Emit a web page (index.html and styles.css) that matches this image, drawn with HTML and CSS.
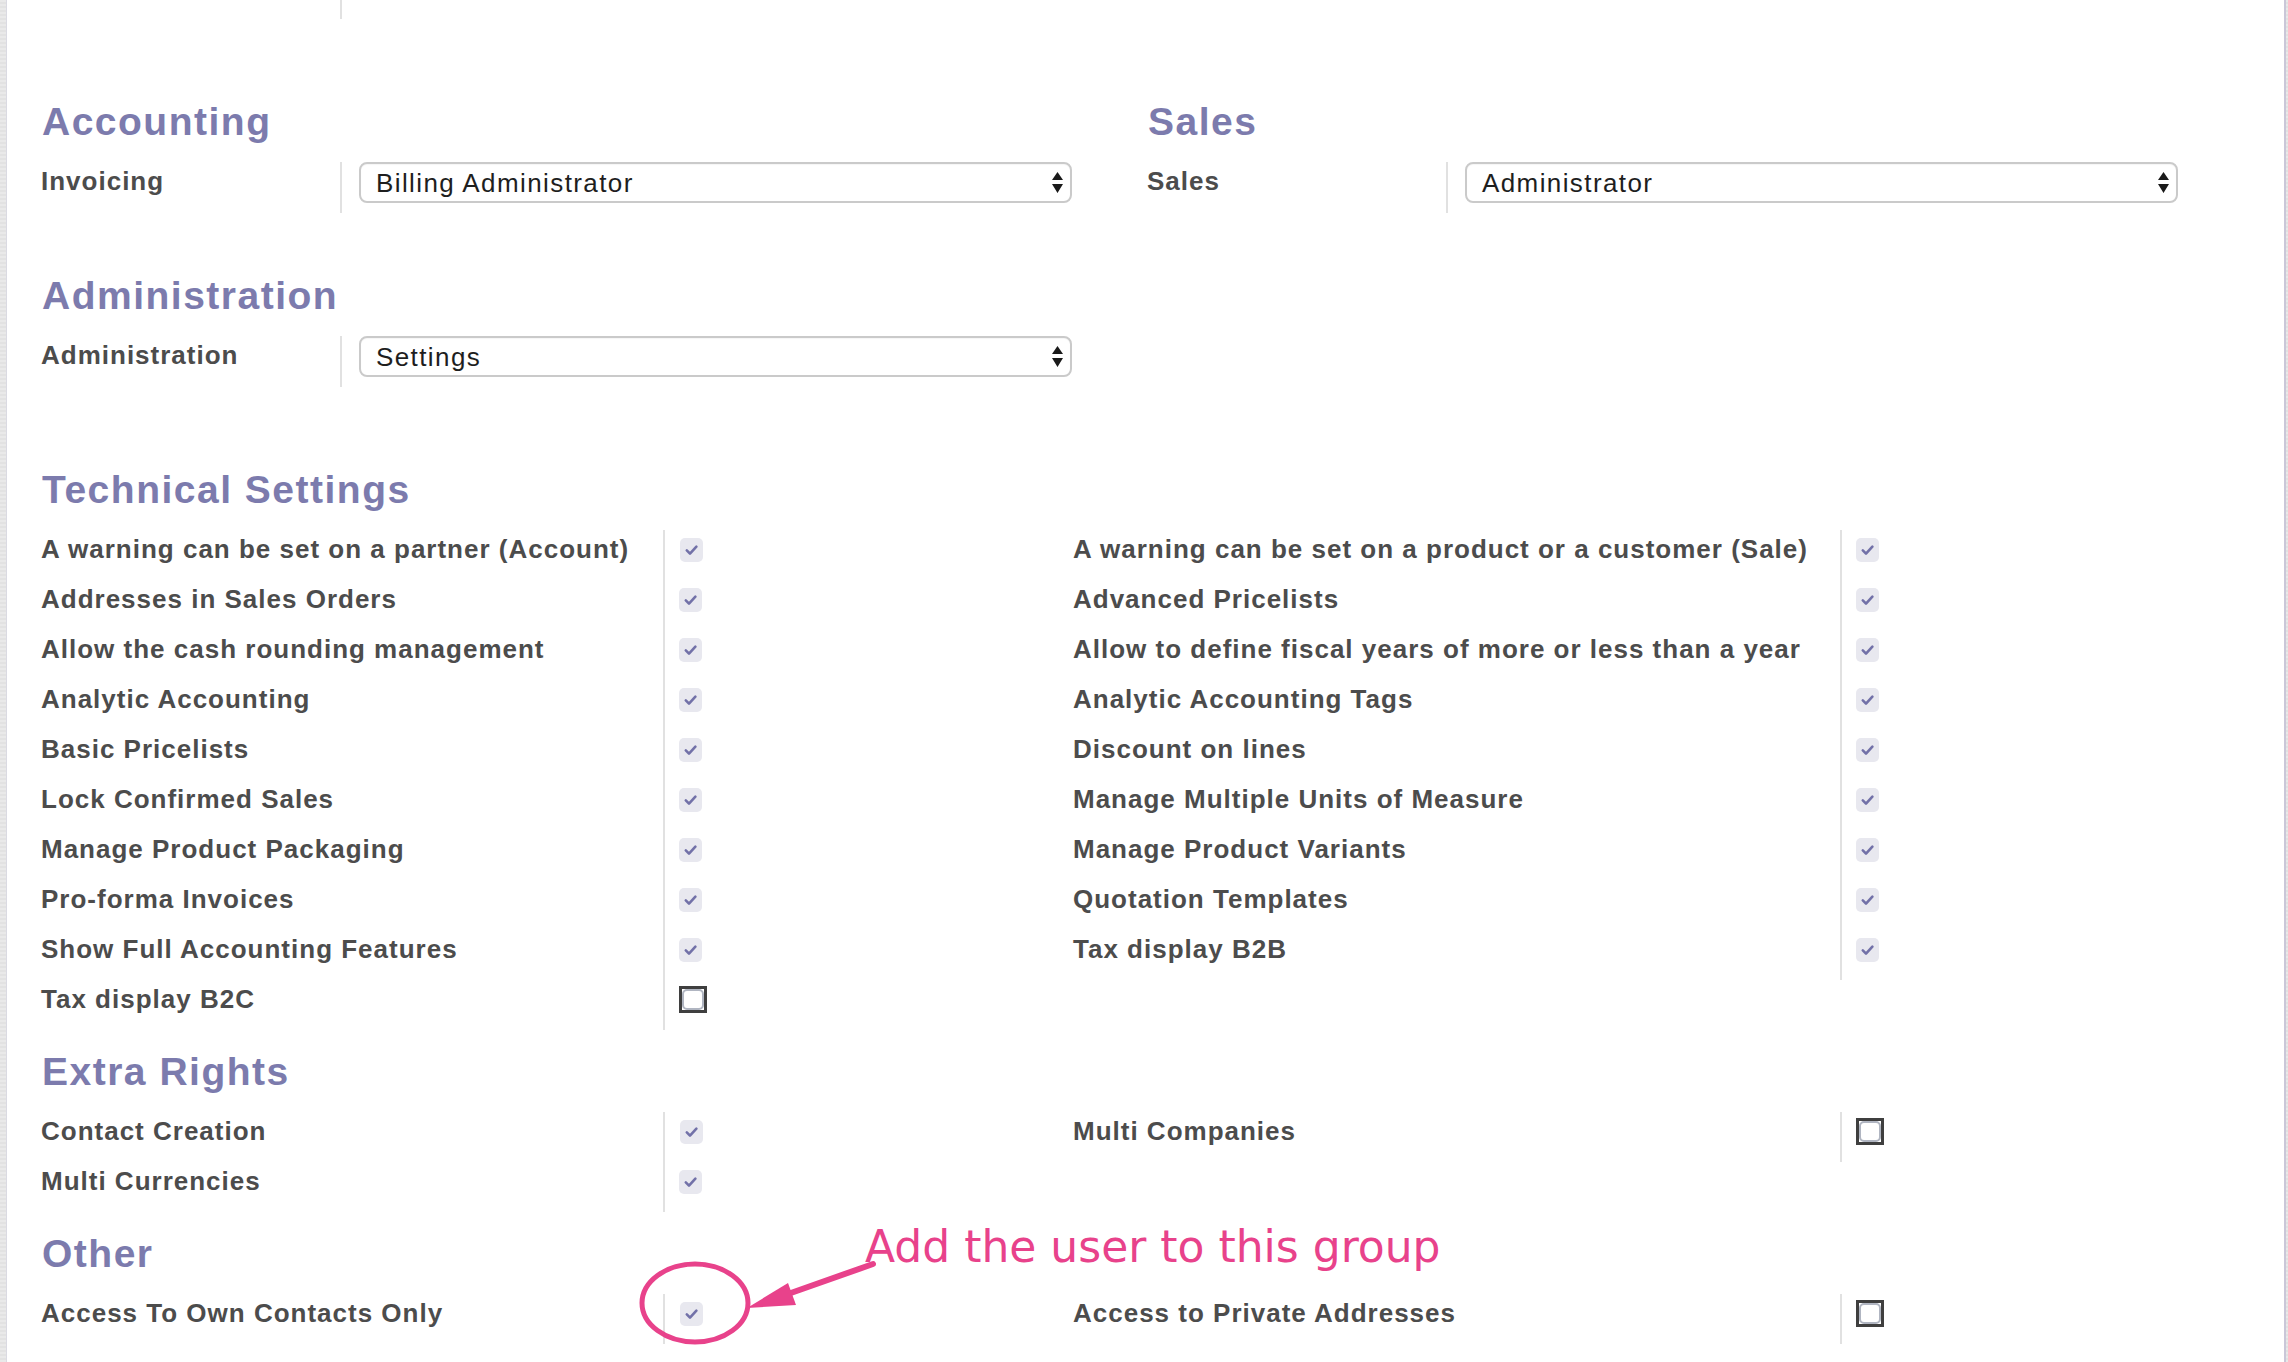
FILE: index.html
```html
<!DOCTYPE html>
<html lang="en">
<head>
<meta charset="utf-8">
<title>User access rights</title>
<link rel="stylesheet" href="styles.css">
</head>
<body>
<div class="page">
  <div class="edge-left"></div>
  <main class="sheet">
    <div class="pair-row top-tail">
      <div class="lab-cell"></div><div class="fld-cell"></div>
    </div>

    <div class="pair gap-first">
      <section class="half">
        <h2 class="sep">Accounting</h2>
        <div class="pair-row">
          <div class="lab-cell">Invoicing</div>
          <div class="fld-cell">
            <div class="select"><span>Billing Administrator</span>
              <svg class="updown" viewBox="0 0 11 21"><path d="M5.5 0 L11 8 L0 8 Z M0 12 L11 12 L5.5 21 Z" fill="#1a1a1a"/></svg>
            </div>
          </div>
        </div>
      </section>
      <section class="half">
        <h2 class="sep">Sales</h2>
        <div class="pair-row">
          <div class="lab-cell">Sales</div>
          <div class="fld-cell">
            <div class="select"><span>Administrator</span>
              <svg class="updown" viewBox="0 0 11 21"><path d="M5.5 0 L11 8 L0 8 Z M0 12 L11 12 L5.5 21 Z" fill="#1a1a1a"/></svg>
            </div>
          </div>
        </div>
      </section>
    </div>

    <div class="pair gap-admin">
      <section class="half">
        <h2 class="sep">Administration</h2>
        <div class="pair-row">
          <div class="lab-cell">Administration</div>
          <div class="fld-cell">
            <div class="select"><span>Settings</span>
              <svg class="updown" viewBox="0 0 11 21"><path d="M5.5 0 L11 8 L0 8 Z M0 12 L11 12 L5.5 21 Z" fill="#1a1a1a"/></svg>
            </div>
          </div>
        </div>
      </section>
    </div>

    <section class="gap-tech">
      <h2 class="sep">Technical Settings</h2>
      <div class="quad">
        <div class="q-lab">A warning can be set on a partner (Account)</div><div class="q-fld"><span class="cb-on"><svg viewBox="0 0 23 24"><path d="M6.8 12.4 L10 15.6 L16.4 8.6"/></svg></span></div>
        <div class="q-lab">A warning can be set on a product or a customer (Sale)</div><div class="q-fld"><span class="cb-on"><svg viewBox="0 0 23 24"><path d="M6.8 12.4 L10 15.6 L16.4 8.6"/></svg></span></div>

        <div class="q-lab">Addresses in Sales Orders</div><div class="q-fld"><span class="cb-on"><svg viewBox="0 0 23 24"><path d="M6.8 12.4 L10 15.6 L16.4 8.6"/></svg></span></div>
        <div class="q-lab">Advanced Pricelists</div><div class="q-fld"><span class="cb-on"><svg viewBox="0 0 23 24"><path d="M6.8 12.4 L10 15.6 L16.4 8.6"/></svg></span></div>

        <div class="q-lab">Allow the cash rounding management</div><div class="q-fld"><span class="cb-on"><svg viewBox="0 0 23 24"><path d="M6.8 12.4 L10 15.6 L16.4 8.6"/></svg></span></div>
        <div class="q-lab">Allow to define fiscal years of more or less than a year</div><div class="q-fld"><span class="cb-on"><svg viewBox="0 0 23 24"><path d="M6.8 12.4 L10 15.6 L16.4 8.6"/></svg></span></div>

        <div class="q-lab">Analytic Accounting</div><div class="q-fld"><span class="cb-on"><svg viewBox="0 0 23 24"><path d="M6.8 12.4 L10 15.6 L16.4 8.6"/></svg></span></div>
        <div class="q-lab">Analytic Accounting Tags</div><div class="q-fld"><span class="cb-on"><svg viewBox="0 0 23 24"><path d="M6.8 12.4 L10 15.6 L16.4 8.6"/></svg></span></div>

        <div class="q-lab">Basic Pricelists</div><div class="q-fld"><span class="cb-on"><svg viewBox="0 0 23 24"><path d="M6.8 12.4 L10 15.6 L16.4 8.6"/></svg></span></div>
        <div class="q-lab">Discount on lines</div><div class="q-fld"><span class="cb-on"><svg viewBox="0 0 23 24"><path d="M6.8 12.4 L10 15.6 L16.4 8.6"/></svg></span></div>

        <div class="q-lab">Lock Confirmed Sales</div><div class="q-fld"><span class="cb-on"><svg viewBox="0 0 23 24"><path d="M6.8 12.4 L10 15.6 L16.4 8.6"/></svg></span></div>
        <div class="q-lab">Manage Multiple Units of Measure</div><div class="q-fld"><span class="cb-on"><svg viewBox="0 0 23 24"><path d="M6.8 12.4 L10 15.6 L16.4 8.6"/></svg></span></div>

        <div class="q-lab">Manage Product Packaging</div><div class="q-fld"><span class="cb-on"><svg viewBox="0 0 23 24"><path d="M6.8 12.4 L10 15.6 L16.4 8.6"/></svg></span></div>
        <div class="q-lab">Manage Product Variants</div><div class="q-fld"><span class="cb-on"><svg viewBox="0 0 23 24"><path d="M6.8 12.4 L10 15.6 L16.4 8.6"/></svg></span></div>

        <div class="q-lab">Pro-forma Invoices</div><div class="q-fld"><span class="cb-on"><svg viewBox="0 0 23 24"><path d="M6.8 12.4 L10 15.6 L16.4 8.6"/></svg></span></div>
        <div class="q-lab">Quotation Templates</div><div class="q-fld"><span class="cb-on"><svg viewBox="0 0 23 24"><path d="M6.8 12.4 L10 15.6 L16.4 8.6"/></svg></span></div>

        <div class="q-lab">Show Full Accounting Features</div><div class="q-fld"><span class="cb-on"><svg viewBox="0 0 23 24"><path d="M6.8 12.4 L10 15.6 L16.4 8.6"/></svg></span></div>
        <div class="q-lab">Tax display B2B</div><div class="q-fld"><span class="cb-on"><svg viewBox="0 0 23 24"><path d="M6.8 12.4 L10 15.6 L16.4 8.6"/></svg></span></div>

        <div class="q-lab">Tax display B2C</div><div class="q-fld"><span class="cb-off"><span class="cb-inner"></span></span></div>
        <div class="q-empty"></div><div class="q-empty"></div>
      </div>
    </section>

    <section class="gap-sec">
      <h2 class="sep">Extra Rights</h2>
      <div class="quad">
        <div class="q-lab">Contact Creation</div><div class="q-fld"><span class="cb-on"><svg viewBox="0 0 23 24"><path d="M6.8 12.4 L10 15.6 L16.4 8.6"/></svg></span></div>
        <div class="q-lab">Multi Companies</div><div class="q-fld"><span class="cb-off"><span class="cb-inner"></span></span></div>

        <div class="q-lab">Multi Currencies</div><div class="q-fld"><span class="cb-on"><svg viewBox="0 0 23 24"><path d="M6.8 12.4 L10 15.6 L16.4 8.6"/></svg></span></div>
        <div class="q-empty"></div><div class="q-empty"></div>
      </div>
    </section>

    <section class="gap-sec">
      <h2 class="sep">Other</h2>
      <div class="quad">
        <div class="q-lab">Access To Own Contacts Only</div><div class="q-fld"><span class="cb-on"><svg viewBox="0 0 23 24"><path d="M6.8 12.4 L10 15.6 L16.4 8.6"/></svg></span></div>
        <div class="q-lab">Access to Private Addresses</div><div class="q-fld"><span class="cb-off"><span class="cb-inner"></span></span></div>
      </div>
    </section>
  </main>
  <div class="edge-right"></div>

  <svg class="marks" viewBox="0 0 2288 1362" width="2288" height="1362">
    <ellipse cx="695" cy="1303" rx="53" ry="39" fill="none" stroke="#e8428b" stroke-width="5"/>
    <line x1="873" y1="1264" x2="788" y2="1294" stroke="#e8428b" stroke-width="6" stroke-linecap="round"/>
    <polygon points="747,1308 788,1283 796,1305" fill="#e8428b"/>
  </svg>
  <div class="note">Add the user to this group</div>
</div>
</body>
</html>
```

FILE: styles.css
```css
html, body {
  margin: 0;
  padding: 0;
  background: #ffffff;
}

body {
  font-family: "Liberation Sans", Arial, sans-serif;
  color: #4c4c4c;
}

.page {
  position: relative;
  width: 2288px;
  height: 1362px;
  overflow: hidden;
  display: flex;
}

.edge-left {
  flex: none;
  width: 6px;
  background: repeating-linear-gradient(180deg, #e9e9e9 0 2px, #e2e2e2 2px 4px);
  border-right: 1px solid #dadae2;
}

.edge-right {
  flex: none;
  width: 2px;
  border-left: 2px solid #cac7d8;
  background: repeating-linear-gradient(180deg, #e8e8e8 0 2px, #e0e0e0 2px 4px);
}

.sheet {
  flex: 1;
  padding: 0 32px 0 33px;
}

/* two-column groups (label + select) */
.pair {
  display: grid;
  grid-template-columns: 1106px 1106px;
}

.pair-row {
  display: grid;
  grid-template-columns: 302px 1fr;
}

.top-tail {
  height: 19px;
}

.lab-cell {
  border-right: 2px solid #e1e1e1;
  font-weight: bold;
  font-size: 26px;
  letter-spacing: 1px;
  line-height: 38px;
  height: 51px;
  box-sizing: border-box;
  padding-left: 1px;
  white-space: nowrap;
}

.top-tail .lab-cell {
  height: 19px;
}

.fld-cell {
  padding-left: 17px;
}

.select {
  box-sizing: border-box;
  width: 713px;
  height: 41px;
  border: 2px solid #cacaca;
  border-radius: 8px;
  background: #ffffff;
  box-shadow: inset 0 1px 1px rgba(0, 0, 0, 0.04);
  padding: 0 7px 0 15px;
  display: flex;
  align-items: center;
  justify-content: space-between;
}

.select span {
  font-size: 26px;
  letter-spacing: 1.4px;
  line-height: 34px;
  color: #1e1e1e;
}

.updown {
  width: 11px;
  height: 21px;
  flex: none;
}

/* section headings */
.sep {
  margin: 0 0 20px 0;
  padding-left: 2px;
  font-size: 39px;
  line-height: 40px;
  height: 40px;
  font-weight: bold;
  letter-spacing: 1.5px;
  color: #7c7bad;
  white-space: nowrap;
}

.gap-first {
  margin-top: 83px;
}

.gap-admin {
  margin-top: 63px;
}

.gap-tech {
  margin-top: 83px;
}

.gap-sec {
  margin-top: 22px;
}

/* four-column checkbox groups */
.quad {
  display: grid;
  grid-template-columns: 625px 407px 770px 1fr;
  grid-auto-rows: 50px;
}

.q-lab {
  border-right: 2px solid #e1e1e1;
  font-weight: bold;
  font-size: 26px;
  letter-spacing: 1px;
  line-height: 38px;
  padding-left: 1px;
  white-space: nowrap;
}

.q-fld {
  padding-left: 15px;
}

.q-lab + .q-fld + .q-lab + .q-fld {
  padding-left: 14px;
}

.cb-on {
  display: block;
  width: 23px;
  height: 24px;
  margin-top: 8px;
  border-radius: 5px;
  background: #e8e8ef;
}

.cb-on svg {
  display: block;
  width: 23px;
  height: 24px;
}

.cb-on path {
  fill: none;
  stroke: #7271a8;
  stroke-width: 2.6;
  stroke-linecap: round;
  stroke-linejoin: round;
}

.q-fld:has(.cb-off) {
  padding-left: 13px;
}

.cb-off {
  display: block;
  box-sizing: border-box;
  width: 28px;
  height: 27px;
  margin-top: 6px;
  border: 3px solid #3f3f3f;
  background: #ffffff;
}

.cb-inner {
  display: block;
  box-sizing: border-box;
  width: 22px;
  height: 21px;
  border: 2px solid #b0b5c1;
  border-radius: 5px;
}

/* annotation overlay */
.marks {
  position: absolute;
  left: 0;
  top: 0;
  pointer-events: none;
}

.note {
  position: absolute;
  left: 865px;
  top: 1225px;
  font-family: "DejaVu Sans", sans-serif;
  font-size: 44px;
  line-height: 44px;
  color: #e8428b;
  white-space: nowrap;
}
```
